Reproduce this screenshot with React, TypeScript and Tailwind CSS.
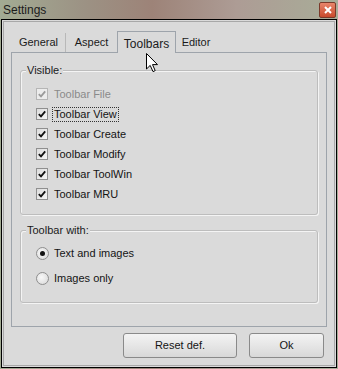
import React from "react";

const font = { fontFamily: '"Liberation Sans", Arial, sans-serif' };

const checks = [
  { label: "Toolbar File", disabled: true },
  { label: "Toolbar View", focus: true },
  { label: "Toolbar Create" },
  { label: "Toolbar Modify" },
  { label: "Toolbar ToolWin" },
  { label: "Toolbar MRU" },
];

function CheckBox({ disabled }: { disabled?: boolean }) {
  return (
    <div
      className={`flex h-[12px] w-[12px] shrink-0 items-center justify-center border ${
        disabled ? "border-[#b5b5b5] bg-[#ececec]" : "border-[#8f8f8f] bg-[linear-gradient(135deg,#dcdcdc,#f6f6f6)]"
      }`}
    >
      <svg width="8" height="8" viewBox="0 0 8 8">
        <path
          d="M0.8 4.2 L3 6.4 L7.2 1.4"
          fill="none"
          stroke={disabled ? "#9a9a9a" : "#111"}
          strokeWidth="1.8"
        />
      </svg>
    </div>
  );
}

function Radio({ on }: { on?: boolean }) {
  return (
    <div className="flex h-[13px] w-[13px] shrink-0 items-center justify-center rounded-full border border-[#8e8e8e] bg-[radial-gradient(circle_at_40%_40%,#f8f8f8,#d6d6d6)]">
      {on && <div className="h-[5px] w-[5px] rounded-full bg-[#111]" />}
    </div>
  );
}

function Group({ title, className, children }: { title: string; className: string; children: React.ReactNode }) {
  return (
    <div className={`relative rounded-[3px] border border-[#bdbdbd] shadow-[inset_1px_1px_0_#f4f4f4,1px_1px_0_#f4f4f4] ${className}`}>
      <span className="absolute left-[5px] top-[-8px] bg-[#dadada] px-[1px] text-[11px] leading-[14px] text-[#1a1a1a]">
        {title}
      </span>
      {children}
    </div>
  );
}

export default function App() {
  return (
    <div
      className="relative h-[369px] w-[338px] overflow-hidden bg-[linear-gradient(to_right,#a2ab93,#9c9284_25%,#9d8378_45%,#ad9c95_70%,#a8ad98)]"
      style={font}
    >
      {/* title bar */}
      <div className="flex h-[19px] items-center justify-between pl-[3px] pr-[2px]">
        <span className="text-[12px] leading-none text-[#1b1b1b]">Settings</span>
        <div className="mt-[1px] flex h-[16px] w-[17px] items-center justify-center rounded-[2px] border border-[#7a3a2a] bg-[linear-gradient(#e8856a,#c94a2c)]">
          <svg width="8" height="8" viewBox="0 0 8 8">
            <path d="M1 1 L7 7 M7 1 L1 7" stroke="#fff" strokeWidth="2" />
          </svg>
        </div>
      </div>

      {/* window body */}
      <div className="ml-[1px] h-[349px] w-[336px] border border-black bg-[#dadada] p-[1px]">
        <div className="flex h-full flex-col border border-[#a8a8a8] bg-[#dadada]">
          {/* tabs */}
          <div className="ml-[8px] mt-[9px] flex h-[21px] items-end text-[11px] text-[#1a1a1a]">
            <div className="flex h-[19px] w-[54px] items-center justify-center border-r border-[#b8b8b8]">General</div>
            <div className="flex h-[19px] w-[51px] items-center justify-center">Aspect</div>
            <div className="relative z-10 -mb-px flex h-[22px] w-[59px] items-start justify-center border border-b-0 border-[#9ea4ab] bg-[#dadada] pt-[3px] text-[12px]">
              Toolbars
            </div>
            <div className="flex h-[19px] w-[40px] items-center justify-center">Editor</div>
          </div>

          {/* panel */}
          <div className="ml-[7px] flex h-[275px] w-[316px] flex-col border border-[#9ea4ab] bg-[#dadada] pl-[8px] pt-[17px]">
            <Group title="Visible:" className="h-[145px] w-[298px]">
              <div className="flex flex-col pl-[15px] pt-[13px]">
                {checks.map((c) => (
                  <div key={c.label} className="flex h-[20px] items-center gap-[5px]">
                    <CheckBox disabled={c.disabled} />
                    <span
                      className={`px-[1px] text-[11px] leading-[13px] ${
                        c.disabled ? "text-[#8a8a8a]" : "text-[#141414]"
                      } ${c.focus ? "outline outline-1 outline-dotted outline-[#333]" : ""}`}
                    >
                      {c.label}
                    </span>
                  </div>
                ))}
              </div>
            </Group>

            <Group title="Toolbar with:" className="mt-[15px] h-[73px] w-[298px]">
              <div className="flex flex-col pl-[15px] pt-[10px]">
                <div className="flex h-[25px] items-center gap-[5px]">
                  <Radio on />
                  <span className="text-[11px] text-[#141414]">Text and images</span>
                </div>
                <div className="flex h-[25px] items-center gap-[5px]">
                  <Radio />
                  <span className="text-[11px] text-[#141414]">Images only</span>
                </div>
              </div>
            </Group>
          </div>

          {/* buttons */}
          <div className="mr-[10px] mt-[6px] flex justify-end gap-[12px] text-[11px] text-[#141414]">
            <button className="flex h-[25px] w-[114px] items-center justify-center rounded-[3px] border border-[#8a8a8a] bg-[linear-gradient(#f3f3f3,#e6e6e6_50%,#d8d8d8)]">
              Reset def.
            </button>
            <button className="flex h-[25px] w-[75px] items-center justify-center rounded-[3px] border border-[#8a8a8a] bg-[linear-gradient(#f3f3f3,#e6e6e6_50%,#d8d8d8)]">
              Ok
            </button>
          </div>
        </div>
      </div>

      {/* mouse cursor */}
      <svg className="absolute left-[146px] top-[53px]" width="13" height="20" viewBox="0 0 13 20">
        <path d="M0.5 0.5 L0.5 16 L4.2 12.4 L7 18.6 L9.2 17.6 L6.5 11.6 L11.5 11.6 Z" fill="#fff" stroke="#000" strokeWidth="1" strokeLinejoin="miter" />
      </svg>
    </div>
  );
}
